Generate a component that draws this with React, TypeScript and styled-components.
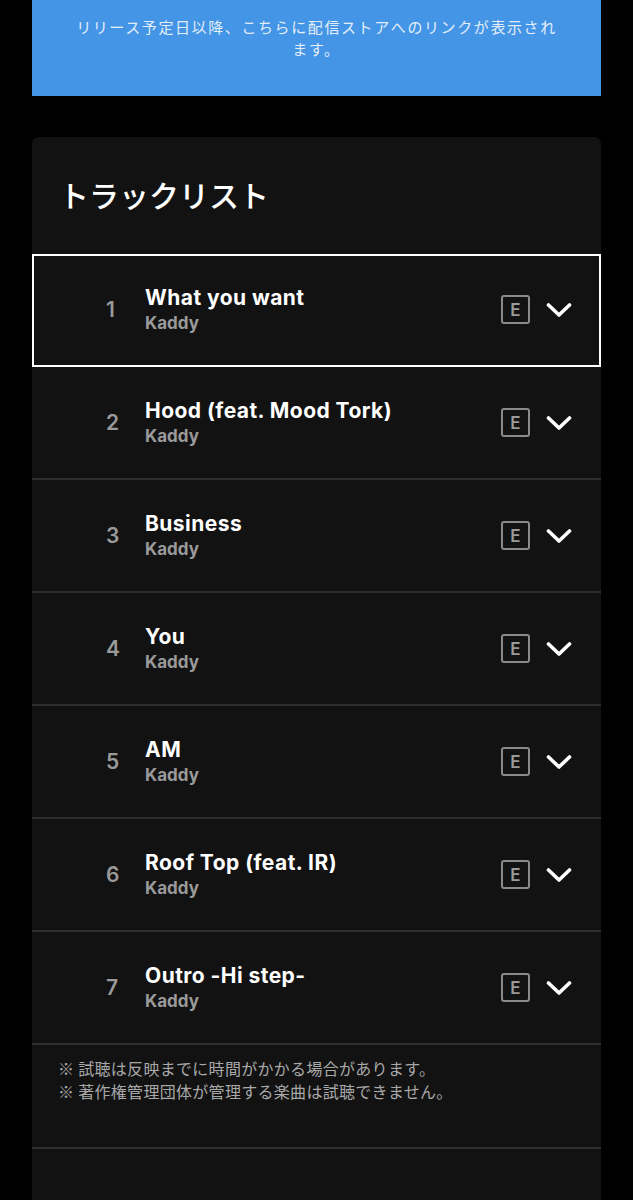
import styled, { createGlobalStyle } from 'styled-components'

const GlobalStyle = createGlobalStyle`
    body {
        margin: 0;
        background: #000;
        font-family: Inter, "Noto Sans CJK JP", sans-serif;
    }
`

interface Track {
    no: number
    title: string
    artist: string
}

const tracks: Track[] = [
    { no: 1, title: 'What you want', artist: 'Kaddy' },
    { no: 2, title: 'Hood (feat. Mood Tork)', artist: 'Kaddy' },
    { no: 3, title: 'Business', artist: 'Kaddy' },
    { no: 4, title: 'You', artist: 'Kaddy' },
    { no: 5, title: 'AM', artist: 'Kaddy' },
    { no: 6, title: 'Roof Top (feat. IR)', artist: 'Kaddy' },
    { no: 7, title: 'Outro -Hi step-', artist: 'Kaddy' },
]

const Chevron = () => (
    <svg width="26" height="16" viewBox="0 0 26 16" fill="none">
        <path d="M2.5 3 L13 13 L23.5 3" stroke="#fff" strokeWidth="3.6" strokeLinecap="round" strokeLinejoin="round" />
    </svg>
)

const App = () => {
    return (
        <Page>
            <GlobalStyle />
            <Banner>
                リリース予定日以降、こちらに配信ストアへのリンクが表示され
                <br />
                ます。
            </Banner>
            <Card>
                <Heading>トラックリスト</Heading>
                <List>
                    {tracks.map((track) => (
                        <Row key={track.no} $active={track.no === 1}>
                            <Num>{track.no}</Num>
                            <Info>
                                <Title>{track.title}</Title>
                                <Artist>{track.artist}</Artist>
                            </Info>
                            <Explicit>E</Explicit>
                            <Chevron />
                        </Row>
                    ))}
                </List>
                <Notes>
                    <p>※ 試聴は反映までに時間がかかる場合があります。</p>
                    <p>※ 著作権管理団体が管理する楽曲は試聴できません。</p>
                </Notes>
                <Bottom />
            </Card>
        </Page>
    )
}

export default App

const Page = styled.div`
    display: flex;
    flex-direction: column;
    gap: 41px;
    padding: 0 32px;
    height: 1200px;
    overflow: hidden;
`

const Banner = styled.div`
    flex-shrink: 0;
    box-sizing: border-box;
    height: 96px;
    padding: 16px 20px 0;
    background: #4495e5;
    color: #e3eefa;
    font-family: "Noto Sans CJK JP", sans-serif;
    font-size: 15px;
    letter-spacing: 1.6px;
    line-height: 22px;
    text-align: center;
`

const Card = styled.div`
    flex-shrink: 0;
    background: #121212;
    border-radius: 7px 7px 0 0;
`

const Heading = styled.h2`
    margin: 0;
    padding: 37px 27px 39px;
    height: 41px;
    color: #fff;
    font-family: "Noto Sans CJK JP", sans-serif;
    font-size: 30px;
    font-weight: 500;
    line-height: 41px;
`

const List = styled.ul`
    margin: 0;
    padding: 0;
    list-style: none;
`

const Row = styled.li<{ $active?: boolean }>`
    box-sizing: border-box;
    height: 113px;
    display: flex;
    align-items: center;
    padding: 0 29px 0 74px;
    border-bottom: 2px solid #2e2e2e;
    outline: ${({ $active }) => ($active ? '2px solid #fff' : 'none')};
    outline-offset: -2px;
`

const Num = styled.span`
    width: 39px;
    color: #9a9a9a;
    font-size: 21px;
    font-weight: 600;
`

const Info = styled.div`
    flex: 1;
    display: flex;
    flex-direction: column;
    gap: 2px;
`

const Title = styled.span`
    color: #fff;
    font-size: 21px;
    font-weight: 700;
    letter-spacing: 0.45px;
    line-height: 25px;
`

const Artist = styled.span`
    color: #9a9a9a;
    font-size: 17px;
    font-weight: 700;
    line-height: 22px;
`

const Explicit = styled.span`
    box-sizing: border-box;
    width: 29px;
    height: 29px;
    margin-right: 16px;
    display: flex;
    justify-content: center;
    align-items: center;
    border: 2px solid #8a8a8a;
    border-radius: 3px;
    color: #9a9a9a;
    font-size: 17px;
    font-weight: 600;
`

const Notes = styled.div`
    padding: 12px 26px 44px;
    border-bottom: 2px solid #2e2e2e;
    color: #a8a8a8;
    font-family: "Noto Sans CJK JP", sans-serif;
    font-size: 16px;
    letter-spacing: 0.3px;
    line-height: 23px;

    p {
        margin: 0;
    }
`

const Bottom = styled.div`
    height: 60px;
`
